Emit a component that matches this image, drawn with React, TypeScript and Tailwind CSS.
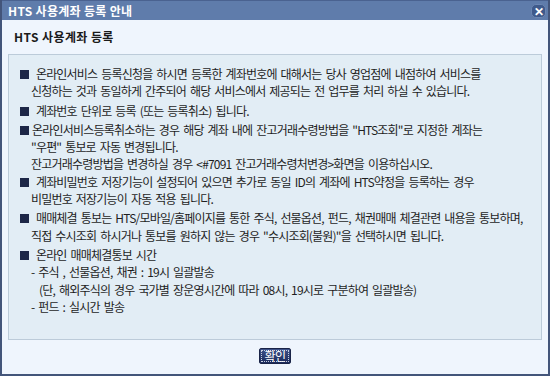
import React from "react";

const font = { fontFamily: '"Noto Sans CJK KR", "Noto Sans", sans-serif' };

function Bullet() {
  return <span className="inline-block w-[9px] h-[9px] bg-[#1d2747] mr-[3px] align-[-0px]" />;
}

export default function App() {
  return (
    <div className="w-[550px] h-[376px] bg-[#43557a] p-[2px] pt-0 flex flex-col" style={font}>
      <div className="h-[20px] bg-[#5f7cab] border-t border-[#4a6290] flex items-center justify-between pl-[6px] pr-[2px]">
        <span className="text-white font-bold text-[12px] tracking-[0.3px]">HTS 사용계좌 등록 안내</span>
        <span className="w-[15px] h-[14px] rounded-[5px] bg-[#3f5a8b] border border-[#6b86b3] flex items-center justify-center text-white text-[12px] font-bold leading-none">✕</span>
      </div>
      <div className="flex-1 bg-[#eff5fd] flex flex-col px-[6px] pb-[2px]">
        <div className="h-[34px] flex items-center pl-[6px] text-[12px] font-bold text-[#1a1a1a] tracking-[0.4px]">HTS 사용계좌 등록</div>
        <div className="h-[286px] bg-[#e2edf5] border border-[#bccbd9] pl-[11px] pt-[10px] text-[12px] text-[#1e1e1e] tracking-[-0.8px] [word-spacing:2px] leading-[17.3px]">
          <div className="whitespace-nowrap"><Bullet /> 온라인서비스 등록신청을 하시면 등록한 계좌번호에 대해서는 당사 영업점에 내점하여 서비스를</div>
          <div className="whitespace-nowrap pl-[11px]">신청하는 것과 동일하게 간주되어 해당 서비스에서 제공되는 전 업무를 처리 하실 수 있습니다.</div>
          <div className="whitespace-nowrap mt-[2px]"><Bullet /> 계좌번호 단위로 등록 (또는 등록취소) 됩니다.</div>
          <div className="whitespace-nowrap mt-[2px]"><Bullet />온라인서비스등록취소하는 경우 해당 계좌 내에 잔고거래수령방법을 "HTS조회"로 지정한 계좌는</div>
          <div className="whitespace-nowrap pl-[11px]">"우편" 통보로 자동 변경됩니다.</div>
          <div className="whitespace-nowrap pl-[11px]">잔고거래수령방법을 변경하실 경우 &lt;#7091 잔고거래수령처변경&gt;화면을 이용하십시오.</div>
          <div className="whitespace-nowrap"><Bullet /> 계좌비밀번호 저장기능이 설정되어 있으면 추가로 동일 ID의 계좌에 HTS약정을 등록하는 경우</div>
          <div className="whitespace-nowrap pl-[11px]">비밀번호 저장기능이 자동 적용 됩니다.</div>
          <div className="whitespace-nowrap mt-[2px]"><Bullet /> 매매체결 통보는 HTS/모바일/홈페이지를 통한 주식, 선물옵션, 펀드, 채권매매 체결관련 내용을 통보하며,</div>
          <div className="whitespace-nowrap pl-[11px]">직접 수시조회 하시거나 통보를 원하지 않는 경우 "수시조회(불원)"을 선택하시면 됩니다.</div>
          <div className="whitespace-nowrap mt-[2px]"><Bullet /> 온라인 매매체결통보 시간</div>
          <div className="whitespace-nowrap pl-[11px]">- 주식 , 선물옵션, 채권 : 19시 일괄발송</div>
          <div className="whitespace-nowrap pl-[19px]">(단, 해외주식의 경우 국가별 장운영시간에 따라 08시, 19시로 구분하여 일괄발송)</div>
          <div className="whitespace-nowrap pl-[11px]">- 펀드 : 실시간 발송</div>
        </div>
        <div className="flex-1 flex items-center justify-center">
          <button className="w-[32px] h-[16px] bg-gradient-to-b from-[#3d528a] to-[#1c2b5c] border border-[#1a2448] rounded-[2px] flex items-center justify-center p-[1px]">
            <span className="w-full h-full border border-dotted border-[#c8d0e0] flex items-center justify-center text-white text-[12px] leading-none tracking-[-0.5px]">확인</span>
          </button>
        </div>
      </div>
    </div>
  );
}
